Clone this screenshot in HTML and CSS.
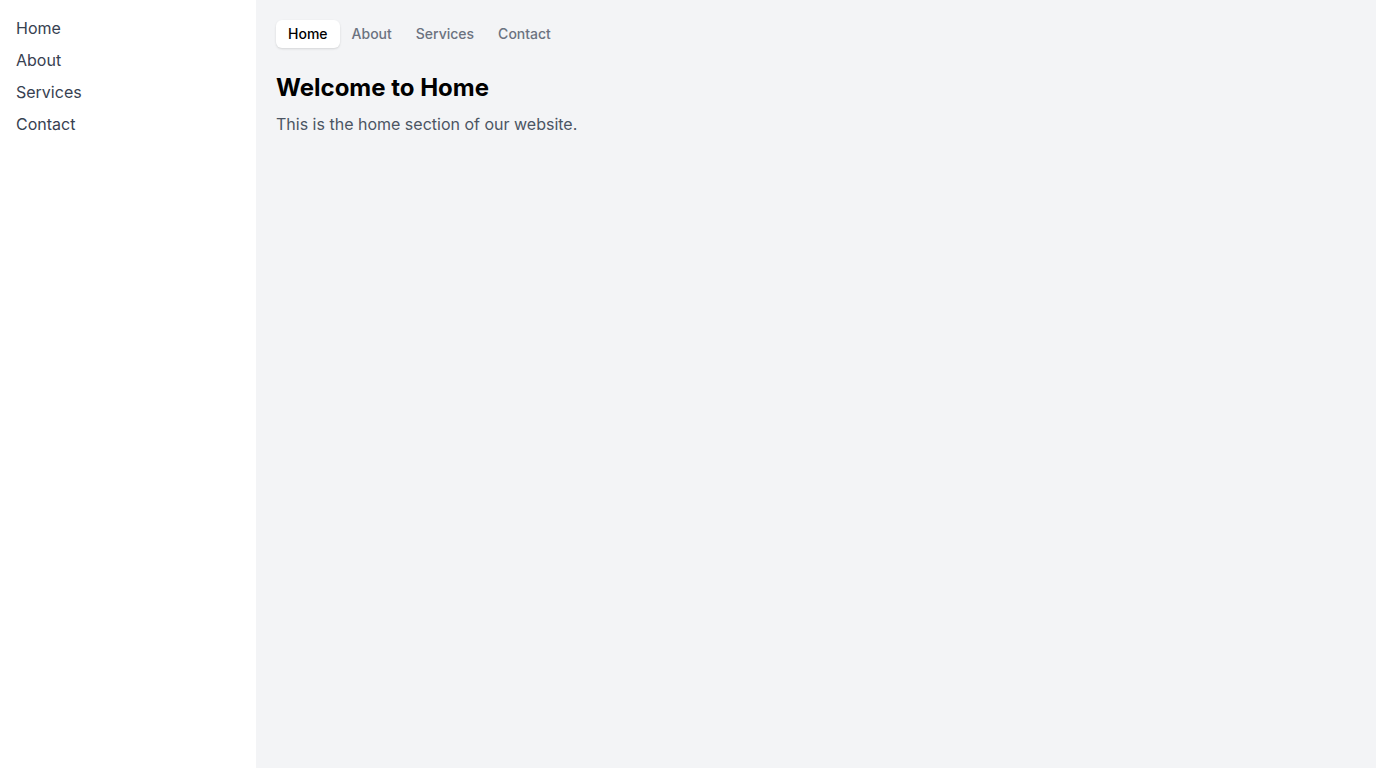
FILE: index.html
```html
<!DOCTYPE html>
<html lang="en">
<head>
<meta charset="utf-8">
<title>Home</title>
<link rel="stylesheet" href="styles.css">
</head>
<body>
<div class="layout">
  <aside class="sidebar">
    <nav class="side-nav">
      <a class="side-link" href="#">Home</a>
      <a class="side-link" href="#">About</a>
      <a class="side-link" href="#">Services</a>
      <a class="side-link" href="#">Contact</a>
    </nav>
  </aside>
  <main class="main">
    <div class="tabs">
      <span class="tab active">Home</span>
      <span class="tab">About</span>
      <span class="tab">Services</span>
      <span class="tab">Contact</span>
    </div>
    <h1 class="title">Welcome to Home</h1>
    <p class="text">This is the home section of our website.</p>
  </main>
</div>
</body>
</html>
```
FILE: styles.css
```css
* { box-sizing: border-box; }
html, body { margin: 0; padding: 0; height: 100%; }
body {
  font-family: Inter, "Noto Sans", sans-serif;
  background: #f3f4f6;
}
.layout {
  display: flex;
  min-height: 100vh;
}
.sidebar {
  width: 256px;
  flex-shrink: 0;
  background: #ffffff;
  padding: 16px;
}
.side-nav {
  display: flex;
  flex-direction: column;
  gap: 8px;
}
.side-link {
  font-size: 16px;
  line-height: 24px;
  color: #374151;
  text-decoration: none;
}
.main {
  flex: 1;
  padding: 20px;
  background: #f3f4f6;
}
.tabs {
  display: flex;
  align-items: center;
}
.tab {
  font-size: 14px;
  line-height: 20px;
  font-weight: 500;
  padding: 4px 12px;
  color: #6b7280;
  border-radius: 6px;
}
.tab.active {
  background: #ffffff;
  color: #000000;
  box-shadow: 0 1px 2px rgba(0,0,0,0.08), 0 1px 3px rgba(0,0,0,0.06);
}
.title {
  margin: 24px 0 0;
  font-size: 24px;
  line-height: 32px;
  font-weight: 700;
  color: #000000;
}
.text {
  margin: 8px 0 0;
  font-size: 16px;
  line-height: 24px;
  color: #4b5563;
}
```
